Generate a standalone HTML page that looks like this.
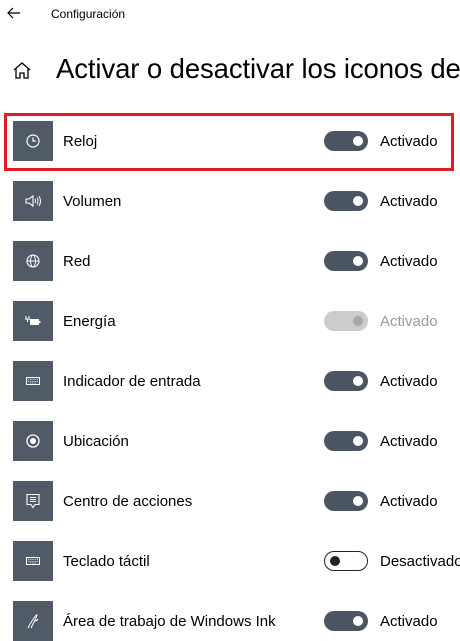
<!DOCTYPE html>
<html><head><meta charset="utf-8"><style>
body{margin:0;width:460px;height:627px;overflow:hidden;background:#fff;font-family:"Liberation Sans",sans-serif;color:#000;position:relative}
.a{position:absolute}
.row{position:absolute;left:0;width:460px;height:40px}
.ic{position:absolute;left:13px;top:0;width:40px;height:40px;background:#515a67}
.ic svg{position:absolute;left:12px;top:12px}
.lb{position:absolute;left:63px;top:12px;font-size:15px}
.tg{position:absolute;left:324px;top:10px;width:44px;height:20px;border-radius:10px;background:#4c5563;box-sizing:border-box}
.tg i{position:absolute;right:5px;top:5px;width:10px;height:10px;border-radius:50%;background:#fff}
.st{position:absolute;left:380px;top:12px;font-size:15px}
</style></head><body>
<svg class="a" style="left:7px;top:7px" width="14" height="12" viewBox="0 0 14 12"><path d="M13 6H1M6 1L1 6l5 5" fill="none" stroke="#000" stroke-width="1.2"/></svg>
<div class="a" style="left:51px;top:7px;font-size:12px">Configuración</div>
<svg class="a" style="left:13px;top:62px" width="18" height="17" viewBox="0 0 18 17"><path d="M1 8L9 1l8 7M3 6.5V16h4v-5h4v5h4V6.5" fill="none" stroke="#000" stroke-width="1.3"/></svg>
<div class="a" style="left:56px;top:53px;font-size:27.5px;letter-spacing:-0.1px;white-space:nowrap">Activar o desactivar los iconos de</div>
<div class="a" style="left:4px;top:113px;width:444px;height:52px;border:3px solid #e31b23"></div>

<div class="row" style="top:121px"><div class="ic"><svg width="16" height="16" viewBox="0 0 16 16"><circle cx="8" cy="8" r="6" fill="none" stroke="#fff" stroke-width="1.2"/><path d="M8 4.5V8h3" fill="none" stroke="#fff" stroke-width="1.2"/></svg></div><div class="lb">Reloj</div><div class="tg"><i></i></div><div class="st">Activado</div></div>
<div class="row" style="top:181px"><div class="ic"><svg width="16" height="16" viewBox="0 0 16 16"><path d="M1 6h3l4-3v10l-4-3H1z" fill="none" stroke="#fff" stroke-width="1.1"/><path d="M10 6q1 2 0 4M12 4.5q2 3.5 0 7M14 3q3 5 0 10" fill="none" stroke="#fff" stroke-width="1"/></svg></div><div class="lb">Volumen</div><div class="tg"><i></i></div><div class="st">Activado</div></div>
<div class="row" style="top:241px"><div class="ic"><svg width="16" height="16" viewBox="0 0 16 16"><circle cx="8" cy="8" r="6" fill="none" stroke="#fff" stroke-width="1.1"/><ellipse cx="8" cy="8" rx="2.5" ry="6" fill="none" stroke="#fff" stroke-width="1"/><path d="M2 8h12" stroke="#fff"/></svg></div><div class="lb">Red</div><div class="tg"><i></i></div><div class="st">Activado</div></div>
<div class="row" style="top:301px"><div class="ic"><svg width="16" height="16" viewBox="0 0 16 16"><path d="M1 3v3M4 3v3M0 6h5M2.5 6v3" fill="none" stroke="#fff" stroke-width="1"/><rect x="5" y="6" width="9" height="6" fill="#fff"/><rect x="14" y="8" width="1.5" height="2" fill="#fff"/></svg></div><div class="lb">Energía</div><div class="tg" style="background:#ccc"><i style="background:#a8a8a8"></i></div><div class="st" style="color:#9a9a9a">Activado</div></div>
<div class="row" style="top:361px"><div class="ic"><svg width="16" height="16" viewBox="0 0 16 16"><rect x="1.5" y="4.5" width="13" height="7" fill="none" stroke="#fff"/><path d="M3 6.5h10M3 8.5h10M5 10h6" stroke="#fff" stroke-width=".8" stroke-dasharray="1 .8"/></svg></div><div class="lb">Indicador de entrada</div><div class="tg"><i></i></div><div class="st">Activado</div></div>
<div class="row" style="top:421px"><div class="ic"><svg width="16" height="16" viewBox="0 0 16 16"><circle cx="8" cy="8" r="6" fill="none" stroke="#fff" stroke-width="1.3"/><circle cx="8" cy="8" r="3" fill="#fff"/></svg></div><div class="lb">Ubicación</div><div class="tg"><i></i></div><div class="st">Activado</div></div>
<div class="row" style="top:481px"><div class="ic"><svg width="16" height="16" viewBox="0 0 16 16"><path d="M2 1.5h12v10H10l-2 3-2-3H2z" fill="none" stroke="#fff" stroke-width="1.1"/><path d="M5 4.5h6M5 6.5h6M5 8.5h6" stroke="#fff"/></svg></div><div class="lb">Centro de acciones</div><div class="tg"><i></i></div><div class="st">Activado</div></div>
<div class="row" style="top:541px"><div class="ic"><svg width="16" height="16" viewBox="0 0 16 16"><rect x="1.5" y="4.5" width="13" height="7" fill="none" stroke="#fff"/><path d="M3 6.5h10M3 8.5h10M5 10h6" stroke="#fff" stroke-width=".8" stroke-dasharray="1 .8"/></svg></div><div class="lb">Teclado táctil</div><div class="tg" style="background:#fff;border:1.5px solid #222"><i style="left:4.5px;top:3.5px;right:auto;background:#222"></i></div><div class="st">Desactivado</div></div>
<div class="row" style="top:601px"><div class="ic"><svg width="16" height="16" viewBox="0 0 16 16"><path d="M3 15q3-6 6-10t3-3-2 5-4 8M9 8q3 0 4-2" fill="none" stroke="#fff" stroke-width="1"/></svg></div><div class="lb">Área de trabajo de Windows Ink</div><div class="tg"><i></i></div><div class="st">Activado</div></div>
</body></html>
